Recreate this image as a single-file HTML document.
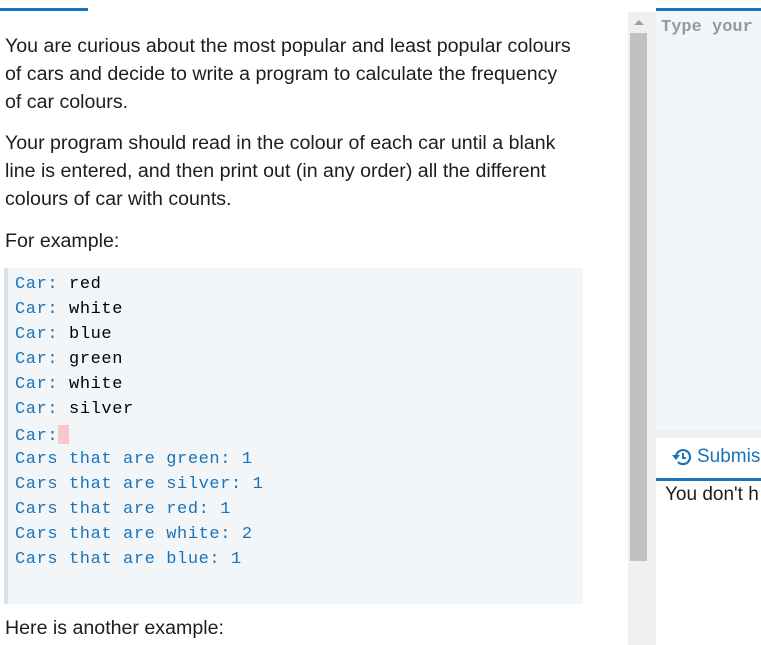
<!DOCTYPE html>
<html><head><style>
body{margin:0;width:761px;height:645px;overflow:hidden;background:#fff;position:relative;font-family:"Liberation Sans",sans-serif;color:#1d1d1d}
.p{position:absolute;left:5px;font-size:19.6px;line-height:28px;width:620px;white-space:nowrap}
.code{position:absolute;left:4px;top:268px;width:579px;height:336px;background:#f3f6f9;border-left:4px solid #d8e2ec;box-sizing:border-box}
.code div{position:absolute;left:7px;font-family:"Liberation Mono",monospace;font-size:17px;letter-spacing:0.6px;white-space:pre;color:#000}
.code .b,.code div.b{color:#1a73b8}
</style></head><body>
<div style="position:absolute;left:0;top:8px;width:88px;height:3px;background:#1a73b8"></div>
<div class="p" style="top:32px">You are curious about the most popular and least popular colours<br>of cars and decide to write a program to calculate the frequency<br>of car colours.</div>
<div class="p" style="top:129px">Your program should read in the colour of each car until a blank<br>line is entered, and then print out (in any order) all the different<br>colours of car with counts.</div>
<div class="p" style="top:227px">For example:</div>
<div class="code">
<div style="top:7px"><span class="b">Car:</span> red</div>
<div style="top:32px"><span class="b">Car:</span> white</div>
<div style="top:57px"><span class="b">Car:</span> blue</div>
<div style="top:82px"><span class="b">Car:</span> green</div>
<div style="top:107px"><span class="b">Car:</span> white</div>
<div style="top:132px"><span class="b">Car:</span> silver</div>
<div style="top:157px"><span class="b">Car:</span><span style="display:inline-block;width:11px;height:19px;background:#f8c8cc;vertical-align:-4px"></span></div>
<div style="top:182px" class="b">Cars that are green: 1</div>
<div style="top:207px" class="b">Cars that are silver: 1</div>
<div style="top:232px" class="b">Cars that are red: 1</div>
<div style="top:257px" class="b">Cars that are white: 2</div>
<div style="top:282px" class="b">Cars that are blue: 1</div>
</div>
<div class="p" style="top:614px">Here is another example:</div>
<div style="position:absolute;left:628px;top:12px;width:28px;height:633px;background:#f0f0f0"></div>
<div style="position:absolute;left:630px;top:33px;width:17px;height:528px;background:#c0c0c0"></div>
<div style="position:absolute;left:634px;top:20px;width:0;height:0;border-left:5px solid transparent;border-right:5px solid transparent;border-bottom:5px solid #a0a0a0"></div>
<div style="position:absolute;left:656px;top:8px;width:105px;height:3px;background:#1a73b8"></div>
<div style="position:absolute;left:656px;top:11px;width:105px;height:419px;background:#f3f6f9"></div>
<div style="position:absolute;left:661px;top:18px;font-family:'Liberation Mono',monospace;font-size:17px;color:#999;font-weight:bold">Type your</div>
<div style="position:absolute;left:656px;top:430px;width:105px;height:8px;background:#f0f0f0"></div>
<svg style="position:absolute;left:671px;top:447px" width="22" height="20" viewBox="0 0 22 20"><path d="M5 10a7 7 0 1 1 2 5" fill="none" stroke="#1a73b8" stroke-width="2.2"/><path d="M1 8l4 5 4-5z" fill="#1a73b8"/><path d="M12 6v5h3" fill="none" stroke="#1a73b8" stroke-width="2"/></svg>
<div style="position:absolute;left:697px;top:446px;font-size:19px;color:#1a73b8">Submis</div>
<div style="position:absolute;left:656px;top:478px;width:105px;height:3px;background:#1a73b8"></div>
<div style="position:absolute;left:665px;top:484px;font-size:19px">You don't h</div>
</body></html>
